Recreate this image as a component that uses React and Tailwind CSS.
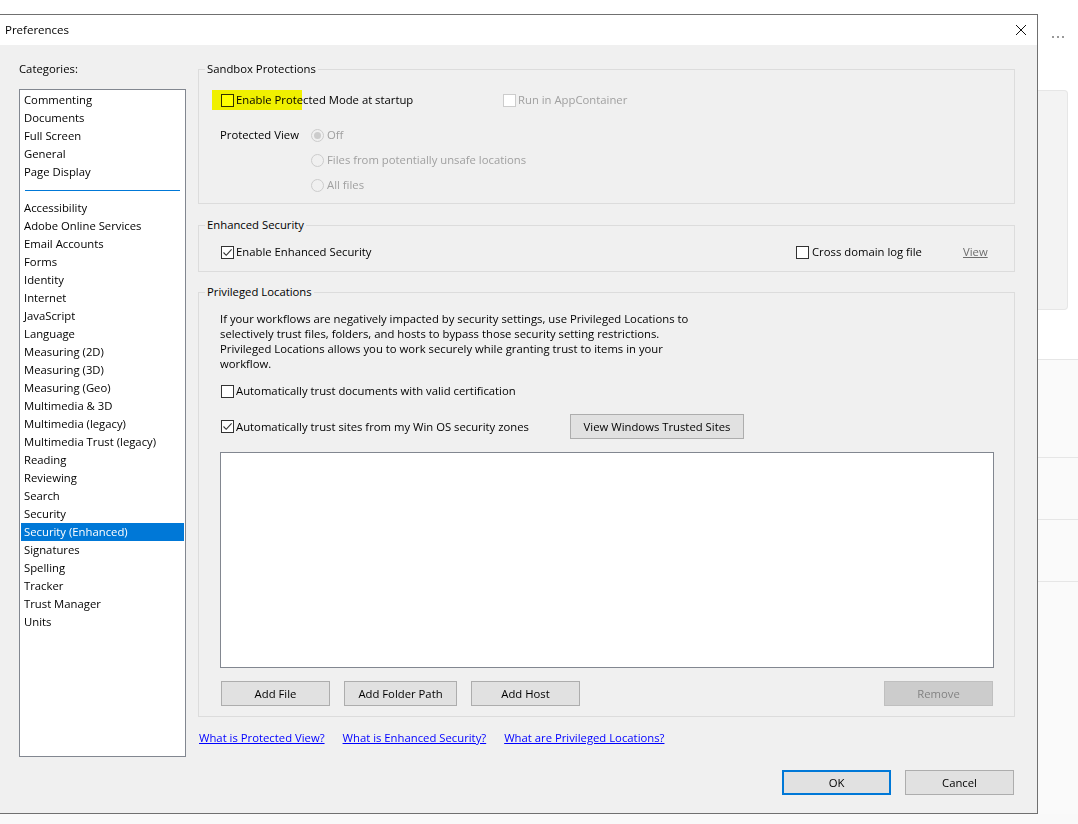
import React from "react";

const topCats = ["Commenting", "Documents", "Full Screen", "General", "Page Display"];
const moreCats = [
  "Accessibility",
  "Adobe Online Services",
  "Email Accounts",
  "Forms",
  "Identity",
  "Internet",
  "JavaScript",
  "Language",
  "Measuring (2D)",
  "Measuring (3D)",
  "Measuring (Geo)",
  "Multimedia & 3D",
  "Multimedia (legacy)",
  "Multimedia Trust (legacy)",
  "Reading",
  "Reviewing",
  "Search",
  "Security",
  "Security (Enhanced)",
  "Signatures",
  "Spelling",
  "Tracker",
  "Trust Manager",
  "Units",
];

function CheckBox({ checked, disabled }) {
  return (
    <span
      className={`w-[13px] h-[13px] shrink-0 border bg-white flex items-center justify-center ${
        disabled ? "border-[#cccccc]" : "border-[#333333]"
      }`}
    >
      {checked && (
        <svg width="11" height="11" viewBox="0 0 11 11">
          <path d="M1.5 5.5 L4.2 8.3 L9.6 2.4" stroke="#333333" strokeWidth="1.1" fill="none" />
        </svg>
      )}
    </span>
  );
}

function Radio({ selected, label }) {
  return (
    <div className="h-[18px] flex items-center">
      <span className="w-[13px] h-[13px] rounded-full border border-[#cccccc] bg-[#f0f0f0] flex items-center justify-center">
        {selected && <span className="w-[7px] h-[7px] rounded-full bg-[#cccccc]" />}
      </span>
      <span className="ml-[3px] text-[#a0a0a0]">{label}</span>
    </div>
  );
}

function Group({ title, className, children }) {
  return (
    <div className={`relative border border-[#dcdcdc] ${className}`}>
      <span className="absolute -top-[9px] left-[6px] px-[2px] leading-[16px] bg-[#f0f0f0]">{title}</span>
      {children}
    </div>
  );
}

function Btn({ children, className }) {
  return (
    <button
      className={`h-[25px] border border-[#adadad] bg-[#e1e1e1] flex items-center justify-center ${className}`}
    >
      {children}
    </button>
  );
}

function CategoryList() {
  return (
    <div className="mt-[12px] h-[668px] border border-[#828790] bg-white p-[1px]">
      {topCats.map((c) => (
        <div key={c} className="h-[18px] px-[3px] flex items-center">
          {c}
        </div>
      ))}
      <div className="h-[18px] flex items-center px-[4px]">
        <div className="h-[1px] w-full bg-[#0078d7]" />
      </div>
      {moreCats.map((c) => (
        <div
          key={c}
          className={`h-[18px] px-[3px] flex items-center ${
            c === "Security (Enhanced)" ? "bg-[#0078d7] text-white" : ""
          }`}
        >
          {c}
        </div>
      ))}
    </div>
  );
}

export default function App() {
  return (
    <div className="w-[1078px] h-[824px] bg-white flex flex-col overflow-hidden font-['Open_Sans',sans-serif] text-[11.3px] leading-[16px] text-black">
      <div className="flex">
        <div className="w-[1038px] pt-[14px]">
          <div className="h-[800px] border-t border-r border-b border-[#707070] bg-[#f0f0f0] flex flex-col">
            {/* title bar */}
            <div className="h-[30px] bg-white flex items-center justify-between pl-[5px] pr-[10px]">
              <span className="text-[11.5px]">Preferences</span>
              <svg width="12" height="12" viewBox="0 0 12 12">
                <path d="M1 1 L11 11 M11 1 L1 11" stroke="#111" strokeWidth="1" />
              </svg>
            </div>

            <div className="flex">
              {/* categories */}
              <div className="ml-[19px] w-[167px] pt-[16px]">
                <div className="h-[16px]">Categories:</div>
                <CategoryList />
              </div>

              {/* settings */}
              <div className="ml-[12px] w-[817px] pt-[24px] flex flex-col">
                <Group title="Sandbox Protections" className="pl-[21px] pt-[21px] pb-[9px]">
                  <div className="relative h-[18px] flex items-center">
                    <div className="w-[283px] flex items-center">
                      <span className="ml-[1px]">
                        <CheckBox />
                      </span>
                      <span className="ml-[2px]">Enable Protected Mode at startup</span>
                    </div>
                    <CheckBox disabled />
                    <span className="ml-[2px] text-[#a0a0a0]">Run in AppContainer</span>
                    <span className="absolute -left-[8px] -top-[1px] w-[90px] h-[20px] bg-[#ffff00] mix-blend-multiply" />
                  </div>
                  <div className="mt-[17px] flex">
                    <div className="w-[91px] h-[18px] flex items-center">Protected View</div>
                    <div className="flex flex-col gap-[7px]">
                      <Radio selected label="Off" />
                      <Radio label="Files from potentially unsafe locations" />
                      <Radio label="All files" />
                    </div>
                  </div>
                </Group>

                <Group title="Enhanced Security" className="mt-[21px] pl-[21px] pr-[20px] pt-[17px] pb-[10px]">
                  <div className="h-[18px] flex items-center">
                    <div className="w-[576px] flex items-center">
                      <span className="ml-[1px]">
                        <CheckBox checked />
                      </span>
                      <span className="ml-[2px]">Enable Enhanced Security</span>
                    </div>
                    <div className="w-[167px] flex items-center">
                      <CheckBox />
                      <span className="ml-[3px]">Cross domain log file</span>
                    </div>
                    <span className="underline text-[#6d6d6d]">View</span>
                  </div>
                </Group>

                <Group title="Privileged Locations" className="mt-[20px] pl-[21px] pr-[20px] pt-[18px] pb-[10px]">
                  <p className="leading-[15px]">
                    If your workflows are negatively impacted by security settings, use Privileged Locations to
                    <br />
                    selectively trust files, folders, and hosts to bypass those security setting restrictions.
                    <br />
                    Privileged Locations allows you to work securely while granting trust to items in your
                    <br />
                    workflow.
                  </p>
                  <div className="mt-[11px] h-[18px] flex items-center">
                    <span className="ml-[1px]">
                      <CheckBox />
                    </span>
                    <span className="ml-[2px]">Automatically trust documents with valid certification</span>
                  </div>
                  <div className="mt-[14px] h-[25px] flex items-center">
                    <div className="w-[350px] flex items-center">
                      <span className="ml-[1px]">
                        <CheckBox checked />
                      </span>
                      <span className="ml-[2px]">Automatically trust sites from my Win OS security zones</span>
                    </div>
                    <Btn className="w-[174px]">View Windows Trusted Sites</Btn>
                  </div>
                  <div className="mt-[13px] h-[216px] border border-[#828790] bg-white" />
                  <div className="mt-[13px] flex gap-[14px] pl-[1px] pr-[1px]">
                    <Btn className="w-[109px]">Add File</Btn>
                    <Btn className="w-[113px]">Add Folder Path</Btn>
                    <Btn className="w-[109px]">Add Host</Btn>
                    <button className="ml-auto w-[109px] h-[25px] border border-[#bfbfbf] bg-[#cccccc] text-[#838383]">
                      Remove
                    </button>
                  </div>
                </Group>

                <div className="mt-[13px] pl-[1px] flex gap-[18px] text-[#0000ff] underline">
                  <span>What is Protected View?</span>
                  <span>What is Enhanced Security?</span>
                  <span>What are Privileged Locations?</span>
                </div>

                <div className="mt-[24px] pr-[1px] flex justify-end gap-[14px]">
                  <button className="w-[109px] h-[25px] border-2 border-[#0078d7] bg-[#e1e1e1]">OK</button>
                  <Btn className="w-[109px]">Cancel</Btn>
                </div>
              </div>
            </div>
          </div>
        </div>

        {/* neighbouring window behind the dialog */}
        <div className="flex-1 flex flex-col">
          <div className="h-[90px] pl-[14px] pt-[36px]">
            <div className="flex gap-[3px]">
              <span className="w-[2px] h-[2px] rounded-full bg-[#777]" />
              <span className="w-[2px] h-[2px] rounded-full bg-[#777]" />
              <span className="w-[2px] h-[2px] rounded-full bg-[#777]" />
            </div>
          </div>
          <div className="w-[30px] h-[220px] bg-[#f3f3f3] border border-l-0 border-[#e6e6e6] rounded-r-[4px]" />
          <div className="h-[49px]" />
          <div className="h-[98px] bg-[#fafafa] border-t border-[#e6e6e6]" />
          <div className="h-[62px] bg-[#fafafa] border-t border-[#e6e6e6]" />
          <div className="h-[62px] bg-[#fafafa] border-t border-[#e6e6e6]" />
          <div className="flex-1 bg-[#fafafa] border-t border-[#e6e6e6]" />
        </div>
      </div>
      <div className="flex-1 bg-[#f9f9f9]" />
    </div>
  );
}
